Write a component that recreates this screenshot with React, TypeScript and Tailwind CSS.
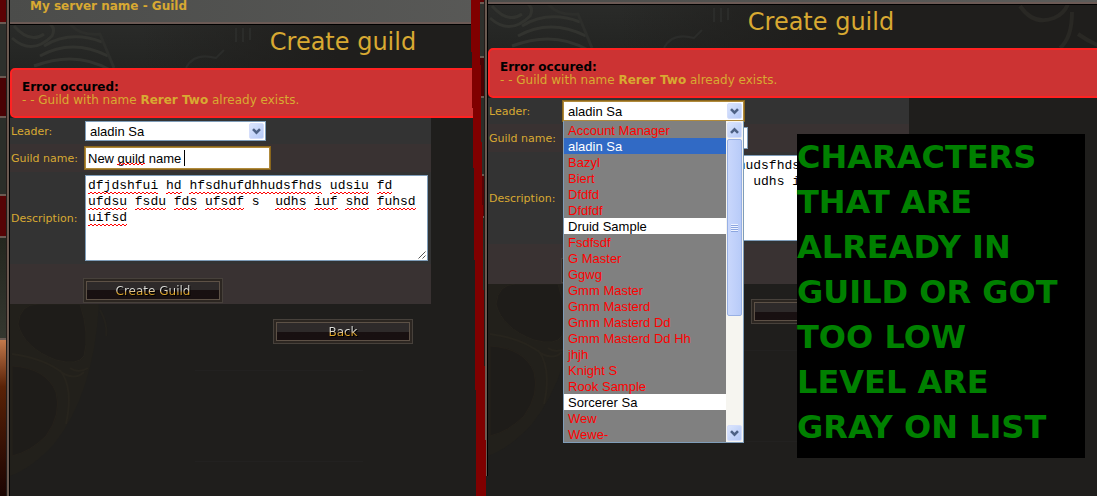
interface Character {
  name: string
  available?: boolean
  selected?: boolean
}

const CHARACTERS: Character[] = [
  { name: 'Account Manager' },
  { name: 'aladin Sa', selected: true },
  { name: 'Bazyl' },
  { name: 'Biert' },
  { name: 'Dfdfd' },
  { name: 'Dfdfdf' },
  { name: 'Druid Sample', available: true },
  { name: 'Fsdfsdf' },
  { name: 'G Master' },
  { name: 'Ggwg' },
  { name: 'Gmm Master' },
  { name: 'Gmm Masterd' },
  { name: 'Gmm Masterd Dd' },
  { name: 'Gmm Masterd Dd Hh' },
  { name: 'jhjh' },
  { name: 'Knight S' },
  { name: 'Rook Sample' },
  { name: 'Sorcerer Sa', available: true },
  { name: 'Wew' },
  { name: 'Wewe-' },
]

const DESCRIPTION = [
  'dfjdshfui hd hfsdhufdhhudsfhds udsiu fd',
  'ufdsu fsdu fds ufsdf s  udhs iuf shd fuhsd',
  'uifsd',
]

const NOTE = [
  'CHARACTERS',
  'THAT ARE',
  'ALREADY IN',
  'GUILD OR GOT',
  'TOO LOW',
  'LEVEL ARE',
  'GRAY ON LIST',
]

function Arrow({ up = false }: { up?: boolean }) {
  return (
    <span className="flex items-center justify-center w-[15px] h-4 rounded-[2px] border border-[#d5defb] bg-linear-to-br from-[#dbe5fd] to-[#b4c8f6]">
      <svg width="9" height="7" viewBox="0 0 9 7" className={up ? 'rotate-180' : ''}>
        <path d="M1 1.200 L4.500 4.700 L8 1.200" fill="none" stroke="#4d6185" strokeWidth="2.600" />
      </svg>
    </span>
  )
}

// Red zigzag under a misspelled word
const ZIGZAG =
  'h-0.5 bg-[repeating-conic-gradient(#f00_0_25%,transparent_0_50%)] bg-[length:4px_2px]'

function SpellMarks() {
  return (
    <div
      aria-hidden="true"
      className="absolute inset-0 p-[3px] pointer-events-none font-['Liberation_Mono',monospace] text-[13px] leading-4"
    >
      {DESCRIPTION.map((line) => (
        <div key={line} className="flex h-4 items-end">
          {line.split(/( +)/).map((part, i) => (
            <span
              key={i}
              className={part.length > 1 && part.trim() ? ZIGZAG : ''}
              style={{ width: `${part.length}ch` }}
            />
          ))}
        </div>
      ))}
    </div>
  )
}

function StoneButton({ label, blank = false }: { label: string; blank?: boolean }) {
  return (
    <button
      type="button"
      aria-label={label}
      className="w-[140px] h-[25px] p-0.5 border border-[#47413b] bg-[#2c2621] cursor-pointer"
    >
      <span className="flex h-full items-center justify-center border border-[#5d5146] bg-linear-to-b from-[#2e2a2a] from-50% to-[#181011] to-50% text-[12px] leading-4">
        {!blank && (
          <span className="bg-linear-to-b from-[#dcdcd8] from-45% to-[#e0a82c] to-60% bg-clip-text text-transparent drop-shadow-[1px_1px_0_#000]">
            {label}
          </span>
        )}
      </span>
    </button>
  )
}

function CharacterList() {
  return (
    <div className="absolute left-0 top-full z-10 flex w-[181px] border border-[#7f9db9] border-t-0 bg-[#808080]">
      <ul role="listbox" aria-label="Leader" className="flex-1 pt-px">
        {CHARACTERS.map((c) => (
          <li
            key={c.name}
            role="option"
            aria-selected={!!c.selected}
            className={`h-4 pl-1 leading-[18px] whitespace-nowrap ${
              c.selected
                ? 'bg-[#316ac5] text-white'
                : c.available
                  ? 'bg-white text-black'
                  : 'text-[#f00]'
            }`}
          >
            {c.name}
          </li>
        ))}
      </ul>
      {/* Scrollbar */}
      <div className="flex w-[17px] flex-col items-center bg-[#f6f5f0] py-px">
        <Arrow up />
        <div className="mt-px flex h-[177px] w-[15px] items-center justify-center rounded-[2px] border border-[#98b0e4] bg-linear-to-r from-[#c9d7fc] to-[#b8cbf8]">
          <div className="h-[8px] w-[7px] bg-[repeating-linear-gradient(#eef3ff_0_1px,#8ca6e0_1px_2px)]" />
        </div>
        <div className="mt-auto">
          <Arrow />
        </div>
      </div>
    </div>
  )
}

// Stone tiles and the flame showing left of the page frame
function SideArt() {
  return (
    <div className="absolute inset-0 flex w-1.5 flex-col" aria-hidden="true">
      <div className="h-[22px] bg-[#5c0204]" />
      <div className="h-[54px] border-t-2 border-[#6b5a52] bg-[#2d302c]" />
      <div className="h-10 border-t-2 border-[#6b5a52] bg-[#4a0204]" />
      <div className="h-[78px] border-t-2 border-[#6b5a52] bg-[#2b2e29]" />
      <div className="h-[42px] border-t-2 border-[#6b5a52] bg-[#560305]" />
      <div className="h-[102px] border-t-2 border-[#6b5a52] bg-linear-to-b from-[#24271f] to-[#34372f]" />
      <div className="flex-1 border-t-2 border-[#6b5a52] bg-linear-to-b from-[#c47a4c] via-[#5a2206] via-30% to-[#1c0502]" />
    </div>
  )
}

function Backdrop() {
  return (
    <svg
      aria-hidden="true"
      className="absolute left-0 top-6"
      width="660"
      height="480"
      viewBox="0 0 660 480"
      fill="none"
    >
      <defs>
        <linearGradient id="haze" x1="0" x2="0" y1="0" y2="1">
          <stop offset="0" stopColor="#2a2b29" />
          <stop offset="1" stopColor="#232422" />
        </linearGradient>
        <linearGradient id="fade" x1="0" x2="1" y1="0" y2="0">
          <stop offset="0.4" stopColor="#1f1e1c" stopOpacity="0" />
          <stop offset="1" stopColor="#1f1e1c" />
        </linearGradient>
      </defs>
      <rect width="330" height="46" fill="url(#haze)" />
      <rect width="330" height="46" fill="url(#fade)" />
      <g stroke="#32332f" strokeWidth="3">
        <path d="M4 2 Q20 20 34 10 M2 14 Q22 32 42 12 Q46 4 40 0" />
        <path d="M34 22 Q60 6 92 18 M30 32 Q62 14 98 32 M24 42 Q66 26 100 46" />
        <path d="M60 0 Q70 12 90 10 L104 44" stroke="#2d2e2b" />
      </g>
      <path d="M176 44 Q184 28 206 34 L214 26 M226 4 V18 M233 4 V18 M240 4 V16" stroke="#2b2c2a" strokeWidth="2" />
      <path d="M532 2 Q546 22 566 14 Q576 10 580 0 M572 44 Q584 34 584 8 M590 30 Q604 40 618 44" stroke="#292824" strokeWidth="4" />
      {/* Skull in the lower corner */}
      <path d="M0 280 H89 Q84 370 44 420 Q22 444 0 452 Z" fill="#22201b" />
      <path d="M8 300 Q10 280 28 280 H70 Q80 310 74 332 Q68 342 46 336 Q14 324 8 300 Z" fill="#1e1c19" stroke="#25221c" />
      <path d="M2 342 Q36 344 46 368 Q52 390 36 412 Q20 428 2 432 Z" fill="#1e1c19" stroke="#25211b" />
      <path d="M2 330 Q34 334 54 350 Q66 356 74 348 M50 346 Q64 364 56 400 M60 344 Q68 350 78 344" stroke="#27241d" strokeWidth="2" />
      <path d="M90 286 Q98 300 96 312" stroke="#23211c" strokeWidth="2" />
      <path d="M185 346.500 H353 M185 437.500 H353" stroke="#222120" />
    </svg>
  )
}

interface GuildPageProps {
  id: string
  title?: string
  guildName: string
  open?: boolean
}

function GuildPage({ id, title, guildName, open = false }: GuildPageProps) {
  const gold = 'border-[#b08a3c] ring-1 ring-[#8a661c]'
  const blue = 'border-[#7f9db9]'

  return (
    <div className="absolute inset-0 overflow-hidden">
      <div className={`relative flex min-h-full ${open ? '-mt-5' : ''}`}>
        <SideArt />
        <div className="ml-1.5 w-1 shrink-0 border-r border-black bg-linear-to-r from-[#231c1a] from-25% to-[#6a5950] to-25%" />

        <div className="relative w-[666px] shrink-0">
          <Backdrop />
          <header className="relative h-6 border-b-2 border-[#6b5a55] bg-linear-to-r from-[#4b4c4a] to-[#5e5e5c] pl-5 shadow-[0_1px_0_#000]">
            {title && <h2 className="text-[12px] font-bold leading-3 text-[#d8a932]">{title}</h2>}
          </header>

          <main className="relative">
            <h1 className="h-11 pt-1 text-center text-[24px] leading-7 text-[#d8a932]">Create guild</h1>

            <div
              role="alert"
              className="rounded-[5px] border-2 border-[#ff2222] bg-[#cc3333] px-2.5 pt-[11px] pb-[9px] text-[12px] leading-[13px]"
            >
              <p className="font-bold text-black">Error occured:</p>
              <p>
                - - Guild with name <b>Rerer Two</b> already exists.
              </p>
            </div>

            <form className="w-[421px]">
              <div className="flex h-[26px] items-center bg-[#333333] pl-px">
                <label htmlFor={`${id}-leader`} className="w-[74px] pt-0.5">Leader:</label>
                <div className="relative font-['Liberation_Sans',sans-serif] text-[13px]">
                  <select
                    id={`${id}-leader`}
                    defaultValue="aladin Sa"
                    className={`block h-5 w-[181px] appearance-none border bg-white pl-1 text-black outline-none ${open ? gold : blue}`}
                  >
                    {CHARACTERS.map((c) => (
                      <option key={c.name}>{c.name}</option>
                    ))}
                  </select>
                  <span className="pointer-events-none absolute right-0.5 top-0.5">
                    <Arrow />
                  </span>
                  {open && <CharacterList />}
                </div>
              </div>

              <div className="flex h-7 items-center bg-[#393232] pl-px">
                <label htmlFor={`${id}-name`} className="w-[74px] pt-0.5 whitespace-nowrap">Guild name:</label>
                <div className="relative">
                  <input
                    id={`${id}-name`}
                    type="text"
                    defaultValue={guildName}
                    className={`block h-[22px] w-[185px] border bg-white px-0.5 font-['Liberation_Sans',sans-serif] text-[13px] text-black outline-none ${open ? blue : gold}`}
                  />
                  {!open && (
                    <>
                      <span className={`absolute bottom-1 left-8 w-7 ${ZIGZAG}`} />
                      <span className="absolute left-[99px] top-[3px] h-4 w-px bg-black" />
                    </>
                  )}
                </div>
              </div>

              <div className="flex h-[92px] items-center bg-[#333333] pl-px">
                <label htmlFor={`${id}-description`} className="w-[74px] pt-0.5">Description:</label>
                <div className="relative">
                  <textarea
                    id={`${id}-description`}
                    defaultValue={DESCRIPTION.join('\n')}
                    spellCheck={false}
                    className="block h-[86px] w-[343px] resize-none overflow-hidden border border-[#7f9db9] bg-white p-0.5 font-['Liberation_Mono',monospace] text-[13px] leading-4 text-black outline-none"
                  />
                  {!open && <SpellMarks />}
                  <svg className="absolute bottom-0.5 right-0.5" width="8" height="8" viewBox="0 0 8 8" aria-hidden="true">
                    <path d="M0.500 7.500 L7.500 0.500 M4.500 7.500 L7.500 4.500" stroke="#555" />
                  </svg>
                </div>
              </div>

              <div className="h-10 bg-[#393232] pl-[73px] pt-3.5">
                <StoneButton label="Create Guild" blank={open} />
              </div>
            </form>

            <div className="flex justify-center pt-[15px]">
              <StoneButton label="Back" blank={open} />
            </div>
          </main>
        </div>
      </div>
    </div>
  )
}

export default function App() {
  return (
    <div className="grid min-h-screen grid-cols-[478fr_619fr] bg-[#1f1e1c] font-['DejaVu_Sans',sans-serif] text-[11px] text-[#d8a932]">
      <section className="relative">
        <GuildPage id="before" title="My server name - Guild" guildName="New guild name " />
      </section>

      <section className="relative">
        <GuildPage id="after" guildName="" open />

        {/* Hand-drawn divider */}
        <svg
          aria-hidden="true"
          className="absolute -left-[7px] top-0 h-full w-[15px]"
          viewBox="0 0 15 496"
          preserveAspectRatio="none"
        >
          <path
            d="M0 0 H9 V65 H10 V142 H11 V205 H12 V290 H13 V366 H14 V440 H15 V496 H5 V390 H4 V260 H3 V168 H2 V108 H1 V52 H0 Z"
            fill="#800000"
          />
        </svg>

        <aside className="absolute right-3 top-[134px] h-[324px] w-[288px] bg-black font-['DejaVu_Sans',sans-serif] text-[32px] font-bold leading-[47px] text-[#008000]">
          {NOTE.map((line) => (
            <p key={line} className="h-[45px] whitespace-nowrap">{line}</p>
          ))}
        </aside>
      </section>
    </div>
  )
}
